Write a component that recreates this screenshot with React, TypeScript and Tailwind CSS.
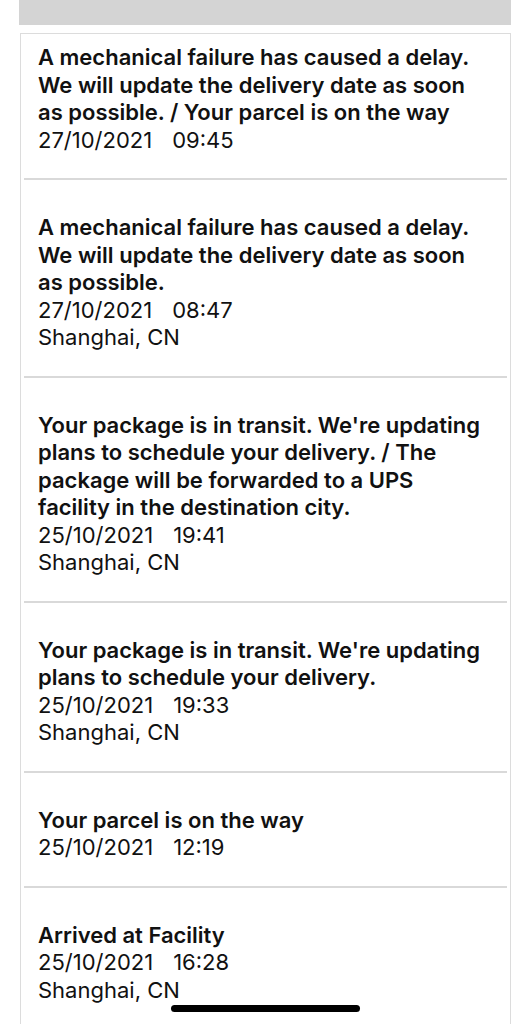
const events = [
  {
    text: "A mechanical failure has caused a delay. We will update the delivery date as soon as possible. / Your parcel is on the way",
    date: "27/10/2021",
    time: "09:45",
  },
  {
    text: "A mechanical failure has caused a delay. We will update the delivery date as soon as possible.",
    date: "27/10/2021",
    time: "08:47",
    place: "Shanghai, CN",
  },
  {
    text: "Your package is in transit. We're updating plans to schedule your delivery. / The package will be forwarded to a UPS facility in the destination city.",
    date: "25/10/2021",
    time: "19:41",
    place: "Shanghai, CN",
  },
  {
    text: "Your package is in transit. We're updating plans to schedule your delivery.",
    date: "25/10/2021",
    time: "19:33",
    place: "Shanghai, CN",
  },
  {
    text: "Your parcel is on the way",
    date: "25/10/2021",
    time: "12:19",
  },
  {
    text: "Arrived at Facility",
    date: "25/10/2021",
    time: "16:28",
    place: "Shanghai, CN",
  },
];

export default function App() {
  return (
    <div
      className="relative h-[1024px] overflow-hidden bg-white text-[#111]"
      style={{ fontFamily: "Inter, 'Liberation Sans', sans-serif" }}
    >
      <div className="ml-[19px] w-[492px] h-[25px] bg-[#d4d4d4]" />

      <div className="mt-[8px] ml-[20px] w-[491px] border border-[#dcdcdc] border-b-0 min-h-[1000px]">
        {events.map((e, i) => (
          <div key={i}>
            {i > 0 && <div className="mx-[3px] h-[2px] bg-[#d9d9d9]" />}
            <div
              className={
                (i === 0 ? "pt-[10px]" : "pt-[34px]") +
                " pb-[24px] pl-[17px] pr-[22px] text-[22px] leading-[27.5px]"
              }
            >
              <p className="font-semibold">{e.text}</p>
              <p>
                {e.date}
                <span className="ml-[20px]">{e.time}</span>
              </p>
              {e.place && <p>{e.place}</p>}
            </div>
          </div>
        ))}
      </div>

      <div className="absolute left-[171px] top-[1005px] w-[189px] h-[7px] rounded-full bg-black" />
    </div>
  );
}
